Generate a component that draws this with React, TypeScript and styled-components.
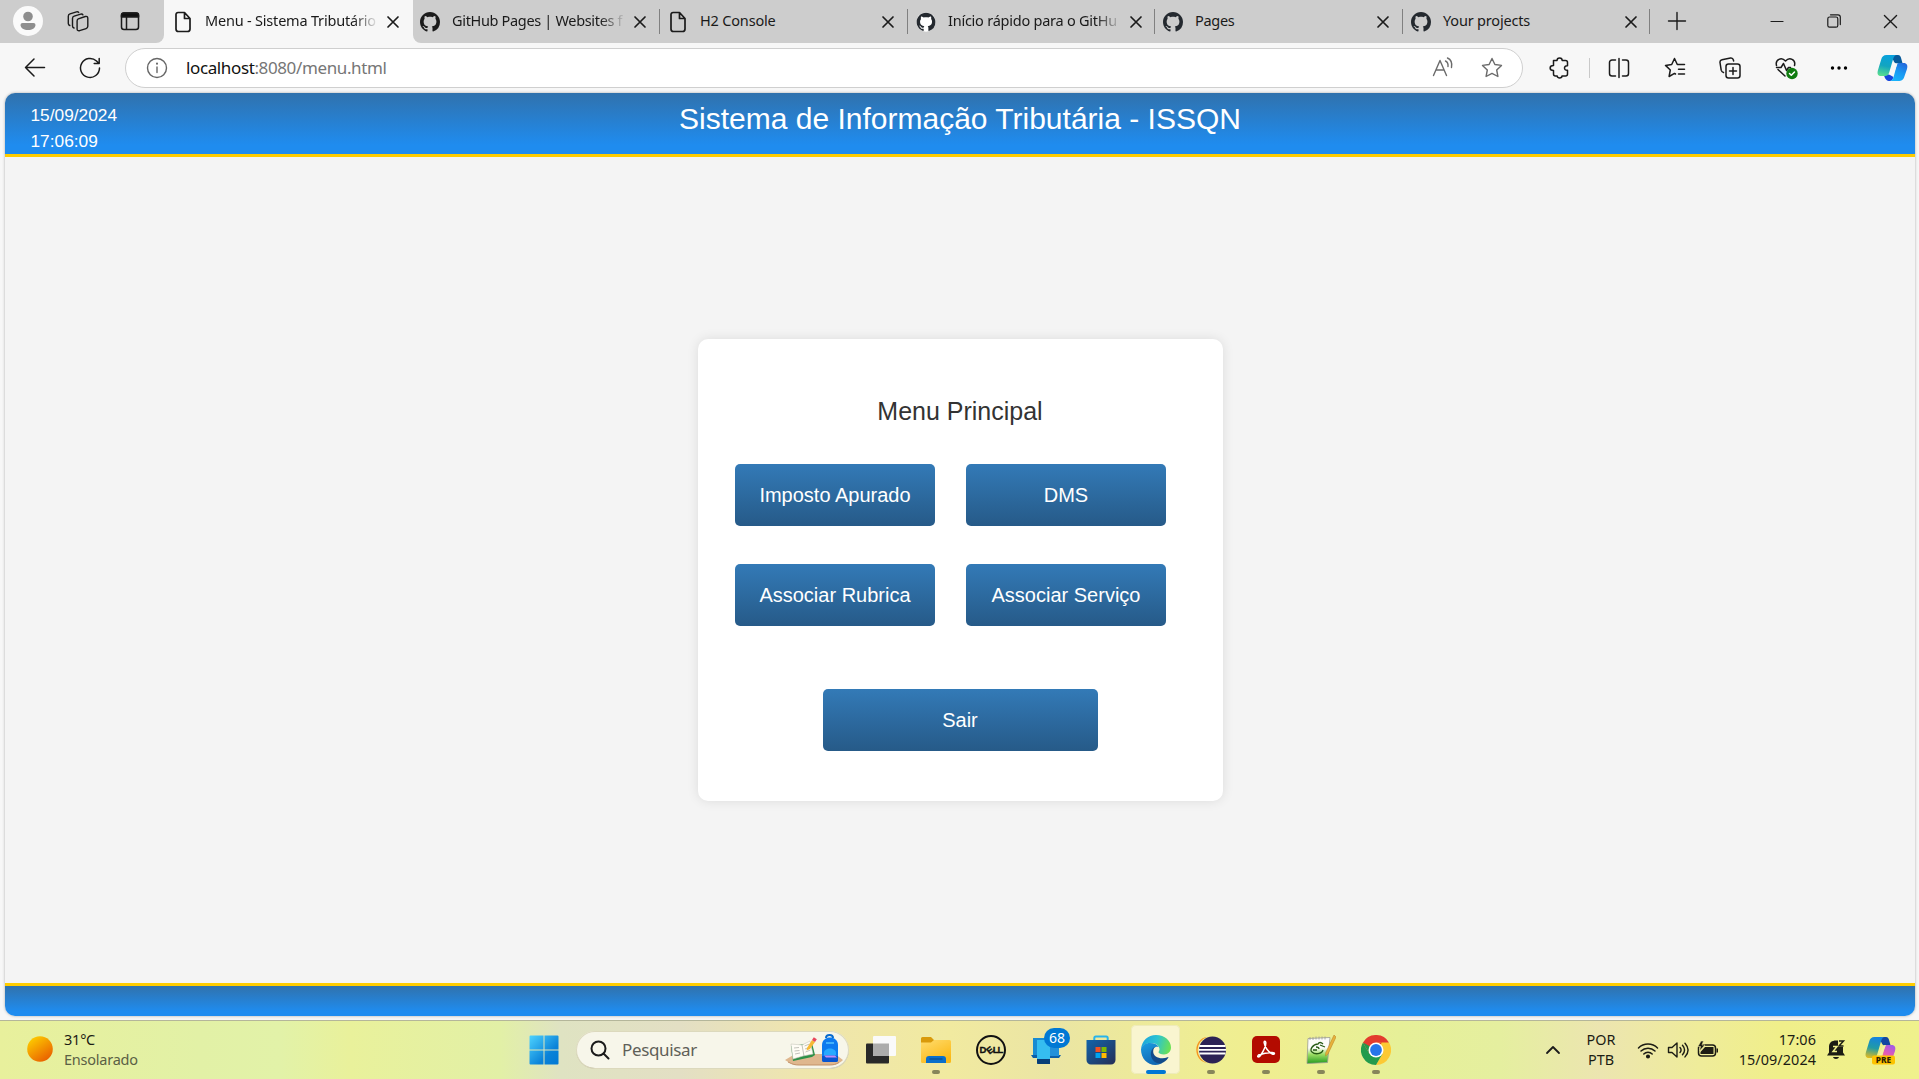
import React from "react";
import styled, { createGlobalStyle } from "styled-components";

const Global = createGlobalStyle`
  * { box-sizing: border-box; }
  body { margin: 0; overflow: hidden; background: #f7f7f7; }
  button { font: inherit; border: 0; background: none; padding: 0; color: inherit; }
`;

const ui = `"Segoe UI", "Noto Sans", "Open Sans", sans-serif`;
const arial = `Arial, "Liberation Sans", sans-serif`;

const Screen = styled.div`
  width: 1919px;
  height: 1079px;
  display: flex;
  flex-direction: column;
  overflow: hidden;
  font-family: ${ui};
`;

/* ---------- browser tabs ---------- */
const TabStrip = styled.div`
  height: 43px;
  flex: none;
  display: flex;
  background: #cdcdcd;
`;
const StripTools = styled.div`
  width: 164px;
  flex: none;
  display: flex;
  align-items: flex-start;
  padding-left: 13px;
  background: #cdcdcd;
  border-bottom-right-radius: 8px;
`;
const ToolSlot = styled.div<{ $w: number }>`
  width: ${(p) => p.$w}px;
  height: 42px;
  flex: none;
  display: flex;
  align-items: center;
  justify-content: center;
  svg { display: block; }
`;
const StripBase = styled.div<{ $w: number }>`
  width: ${(p) => p.$w}px;
  flex: none;
  display: flex;
  background: #f7f7f7;
`;
const TabBox = styled.div<{ $active?: boolean; $first?: boolean; $w: number }>`
  width: ${(p) => p.$w}px;
  height: 43px;
  flex: none;
  display: flex;
  align-items: center;
  padding-left: ${(p) => (p.$active ? 9 : p.$first ? 7 : 8)}px;
  background: ${(p) => (p.$active ? "#f7f7f7" : "#cdcdcd")};
  border-radius: ${(p) => (p.$active ? "9px 9px 0 0" : p.$first ? "0 0 0 8px" : "0")};
`;
const Fav = styled.div`
  width: 20px;
  height: 22px;
  display: flex;
  align-items: center;
  justify-content: center;
`;
const TabTitle = styled.div<{ $fade?: boolean; $ls: number }>`
  width: 172px;
  margin-left: 12px;
  height: 24px;
  line-height: 20px;
  white-space: nowrap;
  font-size: 14.5px;
  letter-spacing: ${(p) => p.$ls}px;
  color: #1a1a1a;
  ${(p) => p.$fade && "mask-image: linear-gradient(90deg, #000 148px, rgba(0, 0, 0, 0.1) 171px);"}
`;
const TabClose = styled.button`
  width: 14px;
  height: 14px;
  margin-left: 9px;
  svg { display: block; }
`;
const TabSep = styled.div`
  width: 1px;
  height: 25px;
  align-self: center;
  margin-left: auto;
  background: #808080;
`;
const WindowButtons = styled.div`
  margin-left: auto;
  display: flex;
`;

/* ---------- toolbar ---------- */
const Toolbar = styled.div`
  height: 50px;
  flex: none;
  display: flex;
  align-items: center;
  padding-left: 7px;
  background: #f7f7f7;
`;
const AddressBar = styled.div`
  width: 1398px;
  height: 40px;
  flex: none;
  margin: 0 6px 0 8px;
  display: flex;
  align-items: center;
  padding: 0 5px 0 9px;
  background: #fff;
  border: 1px solid #cfcfcf;
  border-radius: 20px;
`;
const Url = styled.div`
  flex: 1;
  padding-left: 7px;
  font-size: 17px;
  letter-spacing: -0.38px;
  line-height: 38px;
  color: #767676;
  b { font-weight: 400; color: #111; }
`;
const ToolSep = styled.div`
  width: 1px;
  height: 20px;
  flex: none;
  background: #c9c9c9;
`;

/* ---------- web page ---------- */
const PageFrame = styled.div`
  height: 927px;
  flex: none;
  padding: 0 4px 4px 5px;
  background: #f7f7f7;
`;
const Page = styled.div`
  height: 923px;
  display: flex;
  flex-direction: column;
  background: #f4f4f4;
  border-radius: 10px;
  overflow: hidden;
  font-family: ${arial};
  box-shadow: 0 0 3px rgba(0, 0, 0, 0.3);
`;
const Header = styled.header`
  height: 64px;
  flex: none;
  display: grid;
  grid-template-columns: 1fr auto 1fr;
  color: #fff;
  background: linear-gradient(#3072ad, #1f8cef 85%);
  border-bottom: 3px solid #fc0;
`;
const Clock = styled.div`
  padding: 9px 0 0 25.5px;
  font-size: 17.3px;
  line-height: 26px;
`;
const Title = styled.h1`
  margin: 0;
  padding-top: 8px;
  font-size: 30px;
  font-weight: 400;
  line-height: 36px;
`;
const Main = styled.main`
  flex: 1;
  display: flex;
  justify-content: center;
  align-items: flex-start;
  padding-top: 182px;
`;
const Card = styled.section`
  width: 525px;
  height: 462px;
  padding: 57px 37px 0;
  display: flex;
  flex-direction: column;
  align-items: center;
  background: #fff;
  border-radius: 10px;
  box-shadow: 0 0 12px rgba(0, 0, 0, 0.1);
`;
const CardTitle = styled.h2`
  margin: 0 0 38px;
  font-size: 25px;
  font-weight: 400;
  line-height: 30px;
  color: #333;
`;
const MenuGrid = styled.div`
  align-self: flex-start;
  display: grid;
  grid-template-columns: 200px 200px;
  gap: 38px 31px;
  margin-bottom: 63px;
`;
const MenuButton = styled.button<{ $wide?: boolean }>`
  && {
    width: ${(p) => (p.$wide ? 275 : 200)}px;
    height: 62px;
    padding-left: ${(p) => (p.$wide ? 0 : 1)}px;
    font-size: 20px;
    color: #fff;
    background: linear-gradient(#337ab7, #265a88);
    border-radius: 5px;
  }
`;
const Footer = styled.footer`
  height: 33px;
  flex: none;
  border-top: 3px solid #fc0;
  background: linear-gradient(#3072ad, #1f8cef 85%);
`;

/* ---------- taskbar ---------- */
const Taskbar = styled.div`
  height: 59px;
  flex: none;
  display: flex;
  align-items: center;
  padding-bottom: 1px;
  border-top: 1px solid #b4b69a;
  background: linear-gradient(90deg, #e8f09c 0, #e2f1a6 200px, #e2f2a8 280px, #e9f19b 350px, #e2f0a6 500px, #dfe3c2 560px, #e3dfc4 680px, #efe5ae 800px, #f1eaa0 950px, #ebe5a4 1050px, #efee92 1220px, #f0ee90 1260px, #e6f098 1400px, #e5ef9f 1500px, #ece5b0 1600px, #efec9a 1700px, #f0ef8a 1780px, #eff18c 1919px);
`;
const Weather = styled.div`
  width: 516px;
  flex: none;
  display: flex;
  align-items: center;
  gap: 11px;
  padding: 0 0 1px 27px;
  font-size: 14.5px;
  line-height: 20px;
  letter-spacing: -0.23px;
  color: #1c1c14;
  span { display: block; color: #5b6045; }
`;
const SearchBox = styled.div`
  width: 273px;
  height: 38px;
  flex: none;
  margin: 0 4px 0 8px;
  display: flex;
  align-items: center;
  padding: 0 6px 0 14px;
  border-radius: 19px;
  background: #f7f6ea;
  box-shadow: inset 0 0 0 1px #dcd9bd, inset 0 -1px 0 #b9b797;
  font-size: 17px;
  letter-spacing: -0.35px;
  color: #5f5f58;
  svg { flex: none; }
  p { flex: 1; margin: 0 0 0 12px; }
`;
const AppSlot = styled.div<{ $active?: boolean }>`
  width: 49px;
  height: 49px;
  margin: 0 3px;
  flex: none;
  position: relative;
  display: flex;
  align-items: center;
  justify-content: center;
  border-radius: 5px;
  background: ${(p) => (p.$active ? "#f9f5d0" : "transparent")};
  box-shadow: ${(p) => (p.$active ? "inset 0 0 0 1px #eeebba" : "none")};
`;
const StartSlot = styled(AppSlot)`
  margin: 0 0 0 3px;
`;
const Running = styled.i<{ $active?: boolean }>`
  position: absolute;
  bottom: 0;
  left: 50%;
  transform: translateX(-50%);
  width: ${(p) => (p.$active ? 20 : 8)}px;
  height: 4px;
  border-radius: 2px;
  background: ${(p) => (p.$active ? "#0078d4" : "#87865a")};
`;
const Badge = styled.span`
  position: absolute;
  top: 3px;
  left: 23px;
  width: 26px;
  height: 20px;
  border-radius: 10px;
  background: #0078d4;
  color: #fff;
  font-size: 14px;
  line-height: 20px;
  text-align: center;
`;
const Tray = styled.div`
  flex: none;
  margin-left: auto;
  display: flex;
  align-items: center;
  color: #1c1c14;
  svg { display: block; }
`;
const TrayText = styled.div<{ $right?: boolean; $w: number; $ls: number }>`
  width: ${(p) => p.$w}px;
  font-size: 14.4px;
  line-height: 20px;
  letter-spacing: ${(p) => p.$ls}px;
  text-align: ${(p) => (p.$right ? "right" : "center")};
`;

/* ---------- icons ---------- */
type LineProps = { w?: number; h?: number; box?: string; color?: string; sw?: number; children: React.ReactNode };
const Line = ({ w = 22, h = w, box = "0 0 22 22", color = "#1b1b1b", sw = 1.4, children }: LineProps) => (
  <svg width={w} height={h} viewBox={box} fill="none" stroke={color} strokeWidth={sw} strokeLinecap="round" strokeLinejoin="round">
    {children}
  </svg>
);

const PageIcon = () => (
  <Line w={18} h={22} box="0 0 18 22" sw={1.7}>
    <path d="M4 1.500h6.500l5.500 6v10.500a2.500 2.500 0 0 1-2.500 2.500h-9A2.500 2.500 0 0 1 2 18V3.500a2 2 0 0 1 2-2zM10.500 1.500v6H16" />
  </Line>
);
const GitHubIcon = ({ color = "#24292f", disc = false }: { color?: string; disc?: boolean }) => (
  <svg width="20" height="20" viewBox="0 0 16 16">
    {disc && <circle cx="8" cy="8" r="7.7" fill="#fff" />}
    <path fill={color} transform={disc ? "translate(.5 .5) scale(.94)" : undefined} d="M8 0C3.58 0 0 3.58 0 8c0 3.540 2.290 6.530 5.470 7.590.4.070.550-.170.550-.380 0-.190-.010-.820-.010-1.490-2.010.370-2.530-.490-2.690-.940-.090-.230-.480-.940-.820-1.130-.280-.150-.680-.520-.010-.530.630-.010 1.080.580 1.230.820.720 1.210 1.870.870 2.330.660.070-.520.280-.870.510-1.070-1.780-.2-3.640-.890-3.640-3.950 0-.870.310-1.590.820-2.150-.080-.2-.360-1.020.080-2.120 0 0 .670-.210 2.200.820.640-.180 1.320-.270 2-.270s1.360.090 2 .270c1.530-1.040 2.200-.820 2.200-.820.440 1.100.160 1.920.080 2.120.510.560.820 1.270.820 2.150 0 3.070-1.870 3.750-3.650 3.950.290.250.540.730.540 1.480 0 1.070-.010 1.930-.010 2.200 0 .210.150.460.550.380A8.010 8.010 0 0 0 16 8c0-4.420-3.580-8-8-8z" />
  </svg>
);
const CrossIcon = ({ s = 14, sw = 1.7 }: { s?: number; sw?: number }) => (
  <Line w={s} box="0 0 14 14" sw={sw}><path d="M2 2l10 10M12 2L2 12" /></Line>
);
const Avatar = () => (
  <svg width="30" height="30" viewBox="0 0 30 30">
    <circle cx="15" cy="15" r="15" fill="#fafafa" />
    <circle cx="15" cy="10.500" r="4.800" fill="#8e8e8e" />
    <path d="M9.500 17h11a2 2 0 0 1 2 2c0 3-3.500 5-7.500 5s-7.500-2-7.500-5a2 2 0 0 1 2-2z" fill="#8e8e8e" />
  </svg>
);
const CopilotIcon = ({ pre = false }: { pre?: boolean }) => {
  const id = pre ? "cpp" : "cpn";
  return (
    <svg width="31" height="30" viewBox="0 0 31 30">
      <defs>
        <linearGradient id={id + "a"} x1=".4" y1="0" x2=".2" y2="1">
          <stop offset="0" stopColor={pre ? "#1583dd" : "#08a1dc"} />
          <stop offset=".5" stopColor={pre ? "#219ba5" : "#12a5c0"} />
          <stop offset="1" stopColor={pre ? "#e5bb1c" : "#5ce08d"} />
        </linearGradient>
        <linearGradient id={id + "b"} x1=".8" y1="0" x2=".3" y2="1">
          <stop offset="0" stopColor={pre ? "#a05be8" : "#2468dc"} />
          <stop offset=".5" stopColor={pre ? "#e35bb5" : "#1998f2"} />
          <stop offset="1" stopColor={pre ? "#fa8c50" : "#18b4fb"} />
        </linearGradient>
      </defs>
      <path d="M13 2h8c2 0 2.600 1.500 3.200 3.500l1.400 5h-5c-2 0-3.400-.500-4.400-3.500z" fill={pre ? "#1246a0" : "#075a9b"} />
      <path d="M7 20l6 2 3.500 2c-.6 2-1.500 4-3.500 4-3.500 0-5-2-6-6z" fill={pre ? "#f8b04c" : "#1745dc"} />
      <path d="M9.500 2h10c-2 .5-2.800 2-3.500 4.500l-3.800 13C11.500 22 10 23 8 23H4c-3.500 0-4-2.500-3-6L4.200 6.500C5 3.500 6.500 2 9.500 2z" fill={`url(#${id}a)`} />
      <path d="M22 10h4.500c3.500 0 4.500 2.500 3.500 6l-2.600 7.500C26.300 27 24.500 28 21.500 28H13c2-.5 3-2 3.600-4l3-11.300c.4-1.700 1.200-2.700 2.400-2.700z" fill={`url(#${id}b)`} />
      {!pre && <path d="M18 10.500h2.500l-3 8c-.8 2.200-1.800 3-3.500 3.500l2-9c.4-1.700 1-2.500 2-2.500z" fill="#f7f7f7" />}
      {pre && <path d="M17.500 12c1-2 2-2 3.500-2l-4.500 11h-3z" fill="#f3f0a0" />}
      {pre && <rect x="7" y="20.500" width="23" height="9" rx="2" fill="#fdc300" />}
      {pre && <text x="18.500" y="28.200" fontFamily="Noto Sans" fontWeight="800" fontSize="8.300" textAnchor="middle" fill="#2a2200">PRE</text>}
    </svg>
  );
};
const Backpack = () => (
  <svg width="58" height="32" viewBox="0 0 58 32">
    <path d="M0 26l10-6h40l8 6c-2 2-3 2-4 3-2 1-3 2-8 2H12c-4 0-6-1-12-5z" fill="#dfb78e" />
    <path d="M3 28c5 2.500 7 3 11 3h30c5 0 6-.5 10-2.500" fill="none" stroke="#c29169" />
    <path d="M6 12l2 15 19-4 3-2-3-12z" fill="#2d9148" />
    <path d="M6 10l11 1 8-4 3 13-10 2-10 3z" fill="#fffdf5" stroke="#c9c9bd" strokeWidth=".6" />
    <path d="M17 11l2 11M9 14l5-.5M9.500 17l5-.5M10 20l5-1M19.500 12l5-2M20 15l5-2M20.500 18l5-2" stroke="#a9a9a2" strokeWidth=".7" />
    <path d="M22 14l5-8 3 2-5 7-3.500 1.500z" fill="#f7b934" />
    <path d="M27 6l1.800-2.800 3 2L30 8z" fill="#e8455a" />
    <path d="M41 4c0-4 7-4 7 0" fill="none" stroke="#096bce" strokeWidth="2" />
    <path d="M37 26V11c0-10 16-10 16 0v15a2 2 0 0 1-2 2H39a2 2 0 0 1-2-2z" fill="#0b7aef" />
    <path d="M39 21v-2c0-6 12-6 12 0v2z" fill="#27a9ff" />
    <path d="M37 22h16v4a2 2 0 0 1-2 2H39a2 2 0 0 1-2-2z" fill="#0855d0" />
    <path d="M39 21.500h11l2 2H41z" fill="#c08cf5" />
    <path d="M41 9h8" stroke="#55c4ff" strokeWidth="1.500" />
  </svg>
);
const WindowsLogo = () => (
  <svg width="30" height="30" viewBox="0 0 30 30">
    <defs><linearGradient id="win" gradientUnits="userSpaceOnUse" x1="0" y1="0" x2="30" y2="30"><stop stopColor="#50d5ff" /><stop offset=".65" stopColor="#0a82d8" /><stop offset="1" stopColor="#0078d4" /></linearGradient></defs>
    <path fill="url(#win)" d="M1.500.500h13v14H.500v-13a1 1 0 0 1 1-1zM15.500.500h13a1 1 0 0 1 1 1v13h-14zM.500 15.500h14v14h-13a1 1 0 0 1-1-1zM15.500 15.500h14v13a1 1 0 0 1-1 1h-13z" />
  </svg>
);
const TaskViewIcon = () => (
  <svg width="30" height="30" viewBox="0 0 30 30">
    <rect x="0" y="8.500" width="23" height="20" rx="1" fill="#292929" />
    <rect x="7" y="1" width="23" height="20" rx="1" fill="#fafafa" />
    <path d="M7 8.500h16V21H8a1 1 0 0 1-1-1z" fill="#acacac" />
  </svg>
);
const FolderIcon = () => (
  <svg width="30" height="30" viewBox="0 0 30 30">
    <defs><linearGradient id="fold" x1="0" y1="0" x2=".6" y2="1"><stop stopColor="#ffdc6d" /><stop offset="1" stopColor="#fbb917" /></linearGradient></defs>
    <path d="M0 3.500A1.500 1.500 0 0 1 1.500 2H10l3 3h15v6H0z" fill="#d99a0b" />
    <path d="M0 7.500h10L13 5h15.500A1.500 1.500 0 0 1 30 6.500v20a1.500 1.500 0 0 1-1.500 1.500h-27A1.500 1.500 0 0 1 0 26.500z" fill="url(#fold)" />
    <path d="M5 28v-4a3 3 0 0 1 3-3h14a3 3 0 0 1 3 3v4z" fill="#0a6fcb" />
    <path d="M8.500 24h13" stroke="#0b4a8b" strokeWidth="1.200" />
  </svg>
);
const DellIcon = () => (
  <svg width="30" height="30" viewBox="0 0 30 30">
    <circle cx="15" cy="15" r="14" fill="none" stroke="#111" strokeWidth="2" />
    <g fontFamily="Liberation Sans" fontWeight="700" fontSize="9.500" fill="#111" stroke="#111" strokeWidth=".3">
      <text x="3.500" y="18.400">D</text>
      <text x="-3.200" y="3.400" transform="translate(13.800 15) rotate(-38)">E</text>
      <text x="16.800" y="18.400">L</text>
      <text x="21.500" y="18.400">L</text>
    </g>
  </svg>
);
const PhoneLink = () => (
  <svg width="30" height="30" viewBox="0 0 30 30">
    <path d="M2 3h26v18H2z" fill="#178bd3" />
    <path d="M0 20h30l-2 3H2z" fill="#0b5fa8" />
    <path d="M6 5h13v24H7a1 1 0 0 1-1-1z" fill="#35bdf0" />
    <path d="M6 24h13v5H7a1 1 0 0 1-1-1z" fill="#083e78" />
    <path d="M19 10h9v11h-9z" fill="#2190da" />
  </svg>
);
const StoreIcon = () => (
  <svg width="30" height="30" viewBox="0 0 30 30">
    <defs><linearGradient id="store" x1="0" y1="0" x2="1" y2="1"><stop stopColor="#1264aa" /><stop offset="1" stopColor="#262e56" /></linearGradient></defs>
    <path d="M8.300 6V3a1.500 1.500 0 0 1 1.500-1.500h10.400A1.500 1.500 0 0 1 21.700 3v3" fill="none" stroke="#28b4ec" strokeWidth="2" />
    <path d="M.500 5h29v20a4.500 4.500 0 0 1-4.500 4.500H5A4.500 4.500 0 0 1 .500 25z" fill="url(#store)" />
    <path d="M9.500 12h5v5h-5z" fill="#f25022" /><path d="M15.500 12h5v5h-5z" fill="#7fba00" />
    <path d="M9.500 18h5v5h-5z" fill="#00a4ef" /><path d="M15.500 18h5v5h-5z" fill="#ffb900" />
  </svg>
);
const EdgeIcon = () => (
  <svg width="30" height="30" viewBox="0 0 30 30">
    <defs>
      <linearGradient id="e1" x1="0" y1=".3" x2="1" y2=".5"><stop stopColor="#1ca3dc" /><stop offset=".5" stopColor="#2bc3d2" /><stop offset="1" stopColor="#6be154" /></linearGradient>
      <linearGradient id="e2" x1="0" y1="0" x2=".4" y2="1"><stop stopColor="#1b9de2" /><stop offset="1" stopColor="#1169b5" /></linearGradient>
    </defs>
    <path d="M0 14C1 5.500 7 0 15 0c9 0 15 6 15 12.500 0 4-3 7-7 7-3 0-5.500-1-5.500-2.200 0-.8 1-1.300 1-3C18.500 11 15 8 10 8 5 8 1.500 10.500 0 14z" fill="url(#e1)" />
    <path d="M0 14.500C.500 10.500 4.500 8 9 8c4 0 7.500 1.500 9 4.300-3-1.500-7 1-7.200 5C10.500 23 15 28 21 28c-2 1.300-4 2-6.500 2C6 30 0 23 0 14.500z" fill="url(#e2)" />
    <path d="M14 11.800c-3 1.700-4.800 5-4 9C11 26 15.500 29 20 28.500c3-1 5.500-3 7.300-5.700.3-.5 0-.9-.6-.6C20 25 12 22 12.200 16.500c0-2 .8-3.700 1.800-4.700z" fill="#114a8b" />
  </svg>
);
const EclipseIcon = () => (
  <svg width="30" height="30" viewBox="0 0 30 30">
    <path d="M11 2A13.700 13.700 0 0 0 11 28C-3 26-3.500 4 11 2z" fill="#f7941e" />
    <circle cx="16.500" cy="15" r="13.500" fill="#2c2255" />
    <path d="M3.300 11h26.200M2.900 14.800h27.200M3.300 18.500h26.200" stroke="#fff" strokeWidth="1.800" />
  </svg>
);
const AcrobatIcon = () => (
  <svg width="30" height="30" viewBox="0 0 30 30">
    <rect x="1" y="1" width="28" height="27" rx="5" fill="#b30b00" />
    <path d="M7.500 20c-2 2 .3 3 2.300 0 2.700-4 5.200-9.500 5-12.500-.2-2-2-1.500-1.600.5.600 4 4 9 8 11 3 1 3-1.600 0-1.600-5 0-9.700 1-13.700 2.600z" fill="none" stroke="#fff" strokeWidth="1.500" />
  </svg>
);
const NotepadIcon = () => (
  <svg width="30" height="30" viewBox="0 0 30 30">
    <defs><linearGradient id="np" x1="0" y1="0" x2="0" y2="1"><stop offset=".4" stopColor="#fcfcfa" /><stop offset=".65" stopColor="#9bdd63" /><stop offset="1" stopColor="#249b1f" /></linearGradient></defs>
    <path d="M2 3.500l22-1-2.500 25L1 28.500z" fill="url(#np)" stroke="#999b90" strokeWidth=".8" />
    <path d="M4 2v3M7 2v3M10 1.500v3M13 1.500v3M16 1.500v3M19 1.500v3" stroke="#999" strokeWidth=".8" />
    <path d="M17 9c-2-2-4-2-5 0-5 0-9 6-6 8 3 3 10 2 11-2M10 12c2 0 3 1 3 2M14 10l5 2M7 15h4" fill="none" stroke="#275b16" strokeWidth="1.300" />
    <path d="M28 0l2 2-8 17-2.500 2 .3-3.500z" fill="#e8b13b" stroke="#b27c21" strokeWidth=".5" />
  </svg>
);
const ChromeIcon = () => (
  <svg width="30" height="30" viewBox="0 0 30 30">
    <path d="M15 15L2 7.500A15 15 0 0 1 28 7.500z" fill="#e33b2e" />
    <path d="M15 7.500h13A15 15 0 0 1 15 30l6.500-11.200z" fill="#fcc934" />
    <path d="M21.500 18.800L15 30A15 15 0 0 1 2 7.500l6.500 11.300z" fill="#229b4c" />
    <path d="M2 7.500l6.500 11.300L15 15l6-7.500z" fill="#e33b2e" />
    <path d="M2 7.500l6.500 11.300 3-6z" fill="#229b4c" />
    <circle cx="15" cy="15" r="7.500" fill="#fff" /><circle cx="15" cy="15" r="5.900" fill="#2675ea" />
  </svg>
);
const SunIcon = () => (
  <svg width="26" height="26" viewBox="0 0 26 26">
    <defs><linearGradient id="sun" x1=".1" y1="0" x2=".8" y2="1"><stop stopColor="#ffd400" /><stop offset="1" stopColor="#e85a00" /></linearGradient></defs>
    <circle cx="13" cy="13" r="12.800" fill="url(#sun)" />
  </svg>
);

const tabs = [
  { title: "Menu - Sistema Tributário", icon: <PageIcon />, fade: true, ls: -0.2, w: 249 },
  { title: "GitHub Pages | Websites f", icon: <GitHubIcon color="#1b1b1b" />, fade: true, ls: -0.33, w: 247 },
  { title: "H2 Console", icon: <PageIcon />, ls: -0.18, w: 248 },
  { title: "Início rápido para o GitHu", icon: <GitHubIcon disc />, fade: true, ls: -0.24, w: 247 },
  { title: "Pages", icon: <GitHubIcon />, ls: -0.3, w: 248 },
  { title: "Your projects", icon: <GitHubIcon />, ls: -0.18, w: 247 },
];

const apps = [
  { icon: <TaskViewIcon /> },
  { icon: <FolderIcon />, running: true },
  { icon: <DellIcon /> },
  { icon: <PhoneLink />, badge: "68" },
  { icon: <StoreIcon /> },
  { icon: <EdgeIcon />, running: true, active: true },
  { icon: <EclipseIcon />, running: true },
  { icon: <AcrobatIcon />, running: true },
  { icon: <NotepadIcon />, running: true },
  { icon: <ChromeIcon />, running: true },
];

const menuItems = ["Imposto Apurado", "DMS", "Associar Rubrica", "Associar Serviço"];

const Tabs = () => (
  <TabStrip>
    <StripBase $w={164}>
      <StripTools>
        <ToolSlot $w={30}><Avatar /></ToolSlot>
        <ToolSlot $w={69}>
          <Line w={22} sw={1.4}>
            <path d="M11.300 8.800l7-2.300c1.500-.4 2.500.3 2.500 1.800v8c0 1.200-.5 1.900-1.700 2.300l-6.500 2.100c-1.500.4-2.500-.3-2.500-1.800V11c0-1.200.2-1.800 1.200-2.200z" />
            <path d="M7 18c-1-.3-1.500-1-1.500-2V8.500c0-1.200.5-1.900 1.700-2.300l6.500-2.100c1-.3 1.800 0 2.200.7" />
            <path d="M2.800 15.500c-1-.3-1.500-1-1.500-2V6.200c0-1.200.5-1.900 1.700-2.300l6.500-2.100c1-.3 1.800 0 2.200.7" />
          </Line>
        </ToolSlot>
        <ToolSlot $w={36}>
          <Line w={20} box="0 0 20 20" sw={1.5}>
            <rect x="1.500" y="2" width="17" height="16.500" rx="2.500" />
            <path d="M1.500 6V4a2 2 0 0 1 2-2h13a2 2 0 0 1 2 2v2z" fill="#111" />
            <path d="M6.500 6v12" />
          </Line>
        </ToolSlot>
      </StripTools>
    </StripBase>
    {tabs.map((t, i) => (
      <StripBase key={t.title} $w={t.w}>
        <TabBox $w={t.w} $active={i === 0} $first={i === 1}>
          <Fav>{t.icon}</Fav>
          <TabTitle $fade={t.fade} $ls={t.ls}>{t.title}</TabTitle>
          <TabClose><CrossIcon /></TabClose>
          {i > 0 && <TabSep />}
        </TabBox>
      </StripBase>
    ))}
    <ToolSlot $w={54}><Line w={20} box="0 0 20 20" sw={1.4}><path d="M10 1.500v17M1.500 10h17" /></Line></ToolSlot>
    <WindowButtons>
      <ToolSlot $w={57}><Line w={14} box="0 0 14 14" sw={1.2}><path d="M1 7.500h12" /></Line></ToolSlot>
      <ToolSlot $w={57}>
        <Line w={14} box="0 0 14 14" sw={1.2}>
          <rect x=".8" y="3" width="10" height="10.200" rx="1.800" /><path d="M3.500.800h7.500a2.300 2.300 0 0 1 2.300 2.300v7.500" />
        </Line>
      </ToolSlot>
      <ToolSlot $w={57}><CrossIcon s={17} sw={1.1} /></ToolSlot>
    </WindowButtons>
  </TabStrip>
);

const BrowserBar = () => (
  <Toolbar>
    <ToolSlot $w={56}><Line sw={1.5}><path d="M20.500 10.500H1.500M10 2L1.500 10.500 10 19" /></Line></ToolSlot>
    <ToolSlot $w={54}><Line sw={1.5}><path d="M20.500 11a9.500 9.500 0 1 1-3-7l2.500 2.500M20.200 1.500v5h-5" /></Line></ToolSlot>
    <AddressBar>
      <ToolSlot $w={44}>
        <Line color="#666"><circle cx="11" cy="11" r="9.500" /><path d="M11 10v5.500" /><path d="M11 6.500v.2" strokeWidth={2} /></Line>
      </ToolSlot>
      <Url><b>localhost</b>:8080/menu.html</Url>
      <ToolSlot $w={49}>
        <Line color="#6b6b6b"><path d="M1.500 18.500L8 3.500l6.500 15M4 13h8M13.500 4c2 1 2.800 3 2.500 5.500M15.500 1c3.500 1.500 4.800 5 4 9.500" /></Line>
      </ToolSlot>
      <ToolSlot $w={50}>
        <Line color="#6b6b6b"><path d="M11 1.500l2.900 6 6.600.9-4.800 4.600 1.200 6.500L11 16.400l-5.900 3.100L6.300 13 1.500 8.400l6.600-.9z" /></Line>
      </ToolSlot>
    </AddressBar>
    <ToolSlot $w={60}>
      <Line sw={1.5}><path d="M5.500 3.500H9a2.600 2.600 0 0 1 5.200 0h3.300a2 2 0 0 1 2 2v3.300c-4-.6-4 5 0 4.500V17a2 2 0 0 1-2 2H14c0 2.500-4.800 2.500-4.800 0H7.500a2 2 0 0 1-2-2v-3.500c-4.500 0-4.500-5 0-5z" /></Line>
    </ToolSlot>
    <ToolSep />
    <ToolSlot $w={57}>
      <Line sw={1.5}><path d="M7.500 3H4a2.500 2.500 0 0 0-2.500 2.500v11A2.500 2.500 0 0 0 4 19h3.500M14.500 3H18a2.500 2.500 0 0 1 2.500 2.500v11A2.500 2.500 0 0 1 18 19h-3.500M11 1.500v19" /></Line>
    </ToolSlot>
    <ToolSlot $w={56}>
      <Line sw={1.5}><path d="M11.500 17l-1-.6-5.400 3.100 1.200-6.500L1.500 8.400l6.200-.9 2.800-6 2.800 6h7.200M14.500 12.300h6M14.500 17h6" /></Line>
    </ToolSlot>
    <ToolSlot $w={54}>
      <Line sw={1.5}><rect x="7" y="7" width="14" height="14" rx="2.500" /><path d="M14 10.500v7M10.500 14h7M4.500 15.500c-1.200-.3-2-1-2.300-2.300L1 5.500C.8 4 1.500 3 3 2.700l8.500-1.600c1.500-.2 2.500.4 2.900 1.900l.2.900" /></Line>
    </ToolSlot>
    <ToolSlot $w={57}>
      <Line w={24} box="0 0 24 24" sw={1.5}>
        <path d="M2.500 9.500C1 3.500 7.500.500 11.500 5 15.500.500 22 3.500 20.500 9.500M4 13.500l7 6.500M2.500 11.500H7l2.500-4 3 7 2-3h2" />
        <circle cx="18" cy="17.500" r="5.700" fill="#107c10" stroke="none" />
        <path d="M15.500 17.500l1.800 1.800 3.200-3.300" stroke="#fff" />
      </Line>
    </ToolSlot>
    <ToolSlot $w={50}>
      <svg width="18" height="6"><circle cx="2.500" cy="3" r="1.700" /><circle cx="9" cy="3" r="1.700" /><circle cx="15.500" cy="3" r="1.700" /></svg>
    </ToolSlot>
    <ToolSlot $w={57}><CopilotIcon /></ToolSlot>
  </Toolbar>
);

const SystemTray = () => (
  <Tray>
    <ToolSlot $w={34}><Line w={16} box="0 0 16 16" sw={1.8}><path d="M2 11l6-6 6 6" /></Line></ToolSlot>
    <TrayText $w={62} $ls={0}>POR<br />PTB</TrayText>
    <ToolSlot $w={32}>
      <Line w={22} color="#1c1c14" sw={1.5}><path d="M1.500 9a13.500 13.500 0 0 1 19 0M4 12a10 10 0 0 1 14 0M6.800 15a6 6 0 0 1 8.400 0" /><circle cx="11" cy="17.500" r="1.300" fill="#1c1c14" /></Line>
    </ToolSlot>
    <ToolSlot $w={28}>
      <Line w={22} color="#1c1c14"><path d="M1.500 8.500H5l5-4.500v14l-5-4.500H1.500zM13 8.500c1.300 1.500 1.300 3.500 0 5M15.500 6.300c2.600 3 2.600 6.500 0 9.500M18 4.200c4 4.500 4 9.300 0 13.700" /></Line>
    </ToolSlot>
    <ToolSlot $w={32}>
      <svg width="22" height="18" viewBox="0 0 22 18"><rect x="1.500" y="4" width="17" height="11" rx="3" fill="none" stroke="#1c1c14" strokeWidth="1.500" /><path d="M8 6h8.500v7h-13v-2zM19.500 7.500h1.500v4h-1.500z" fill="#1c1c14" /><path d="M4 0L1 5.500h2.500L2.500 10 8 4H5L6.500 0z" fill="#1c1c14" stroke="#efeb9f" strokeWidth=".6" /></svg>
    </ToolSlot>
    <TrayText $w={92} $right $ls={0.08}>17:06<br />15/09/2024</TrayText>
    <ToolSlot $w={39}>
      <svg width="20" height="22" viewBox="0 0 20 22"><path d="M1 16.500l2-3V8c0-4.500 3-6.500 7-6.500h2V8h5v5.500l2 3zM7 18h6c-.5 2.500-5.500 2.500-6 0z" fill="#1c1c14" /><path d="M13 2h4.500L13 7h4.500" fill="none" stroke="#1c1c14" strokeWidth="1.500" /><path d="M7 7.500h4l-4 5h4" fill="none" stroke="#efef8a" strokeWidth="1.500" /></svg>
    </ToolSlot>
    <ToolSlot $w={50}><CopilotIcon pre /></ToolSlot>
    <ToolSlot $w={14} />
  </Tray>
);

export default function App() {
  return (
    <Screen>
      <Global />
      <Tabs />
      <BrowserBar />
      <PageFrame>
        <Page>
          <Header>
            <Clock>15/09/2024<br />17:06:09</Clock>
            <Title>Sistema de Informação Tributária - ISSQN</Title>
          </Header>
          <Main>
            <Card>
              <CardTitle>Menu Principal</CardTitle>
              <MenuGrid>{menuItems.map((m) => <MenuButton key={m}>{m}</MenuButton>)}</MenuGrid>
              <MenuButton $wide>Sair</MenuButton>
            </Card>
          </Main>
          <Footer />
        </Page>
      </PageFrame>
      <Taskbar>
        <Weather><SunIcon /><div>31°C<span>Ensolarado</span></div></Weather>
        <StartSlot><WindowsLogo /></StartSlot>
        <SearchBox>
          <Line w={20} box="0 0 20 20" sw={2}><circle cx="8.500" cy="8.500" r="7" /><path d="M13.500 13.500l5 5" /></Line>
          <p>Pesquisar</p>
          <Backpack />
        </SearchBox>
        {apps.map((a, i) => (
          <AppSlot key={i} $active={a.active}>
            {a.icon}
            {a.running && <Running $active={a.active} />}
            {a.badge && <Badge>{a.badge}</Badge>}
          </AppSlot>
        ))}
        <SystemTray />
      </Taskbar>
    </Screen>
  );
}
